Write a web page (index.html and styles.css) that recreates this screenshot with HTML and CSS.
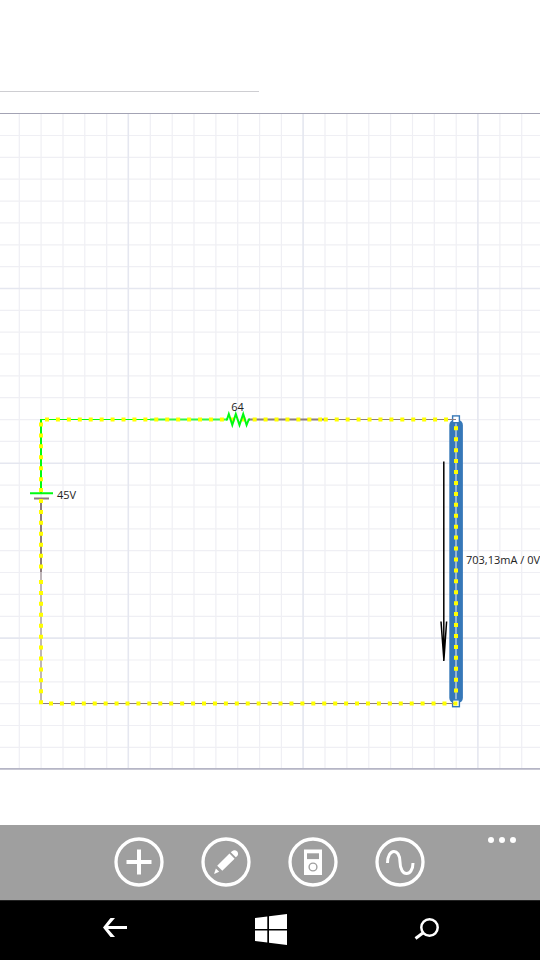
FILE: index.html
```html
<!DOCTYPE html>
<html lang="en">
<head>
<meta charset="utf-8">
<meta name="viewport" content="width=device-width, initial-scale=1">
<title>Circuit</title>
<link rel="stylesheet" href="styles.css">
</head>
<body>
<header class="header"><hr class="rule"></header>
<main class="sheet">
<svg class="circuit" viewBox="0 113 540 657" role="img" aria-label="Circuit diagram">
  <path class="grid" d="M19.3 114V768M41.1 114V768M63 114V768M84.8 114V768M106.7 114V768M150.3 114V768M172.2 114V768M194 114V768M215.9 114V768M237.7 114V768M259.6 114V768M281.4 114V768M325 114V768M346.9 114V768M368.8 114V768M390.6 114V768M412.5 114V768M434.3 114V768M456.2 114V768M499.9 114V768M521.7 114V768"/>
  <path class="grid" d="M0 135.5H540M0 157.4H540M0 179.2H540M0 201.1H540M0 222.9H540M0 244.8H540M0 266.6H540M0 310.4H540M0 332.2H540M0 354H540M0 375.9H540M0 397.7H540M0 419.6H540M0 441.4H540M0 485.1H540M0 507H540M0 528.8H540M0 550.7H540M0 572.5H540M0 594.4H540M0 616.3H540M0 660H540M0 681.8H540M0 703.6H540M0 725.5H540M0 747.3H540"/>
  <path class="grid major" d="M128.3 114V768M303.1 114V768M477.9 114V768M0 288.5H540M0 463.2H540M0 638.1H540"/>
  <path class="edge" d="M0 113.5H540"/>
  <path class="edge low" d="M0 768.9H540"/>

  <rect class="selection" x="449.3" y="420" width="13.6" height="283" rx="5"/>
  <path class="core" d="M456 422V701"/>
  <rect class="handle" x="452.6" y="415.9" width="6.8" height="6.8"/>
  <rect class="handle" x="452.6" y="699.9" width="6.8" height="6.8"/>

  <path class="live thin" d="M41 419.5H150"/>
  <path class="live pale" d="M150 419.5H227"/>
  <path class="return" d="M249 419.5H327"/>
  <path class="return thin" d="M327 419.5H456M41 703.5H456"/>
  <path class="live" d="M41 419V493M30 493.2H53"/>
  <path class="return" d="M34 498.5H49M41 498V572"/>
  <path class="return faint" d="M41 572V703"/>

  <path class="current" d="M45 419.5H322M323.8 419.5H448.5M41 422.5V569M41 580V704.8M49 703.5H458M456 426.3V693"/>
  <path class="live" d="M226 419.5H227L228.800 414L232.300 425L235.800 414L239.500 425L243.200 414L246.600 425L248.800 419.500H250"/>

  <path class="arrow" d="M443.8 461.5V661M441 621.5L443.9 660L446.6 621.5"/>
  <text class="label" x="237.5" y="411" text-anchor="middle">64</text>
  <text class="label" x="57" y="499">45V</text>
  <text class="label" x="466" y="564">703,13mA / 0V</text>
</svg>
</main>
<div class="appbar">
  <div class="tools">
    <button class="tool" aria-label="Add"><svg viewBox="0 0 50 50"><circle class="ring" cx="25" cy="25" r="23"/><path class="stroke plus" d="M25 12.500V37.500M12.500 25H37.500"/></svg></button>
    <button class="tool" aria-label="Edit"><svg viewBox="0 0 50 50"><circle class="ring" cx="25" cy="25" r="23"/><path class="solid" d="M28.500 16.600L33.600 21.700L21.300 33.800L16.200 28.700ZM29.800 15.300L31 14.300Q33.700 12 36.300 14.500Q38 17.200 36 19.200L34.800 20.300ZM14.900 31.500L18.200 34.800L13 37Z"/></svg></button>
    <button class="tool" aria-label="Measure"><svg viewBox="0 0 50 50"><circle class="ring" cx="25" cy="25" r="23"/><rect class="solid" x="16" y="12.500" width="18" height="25.500"/><rect class="hole" x="19" y="16.300" width="12" height="5.800"/><circle class="dial" cx="25" cy="30" r="3.900"/></svg></button>
    <button class="tool" aria-label="Signal"><svg viewBox="0 0 50 50"><circle class="ring" cx="25" cy="25" r="23"/><path class="stroke" d="M12.500 26C12.500 11 25 10.500 25 25C25 40.500 38 40 38 26"/></svg></button>
  </div>
  <button class="more" aria-label="More"><svg viewBox="0 0 30 8"><circle cx="4" cy="4" r="3"/><circle cx="15" cy="4" r="3"/><circle cx="26" cy="4" r="3"/></svg></button>
</div>
<nav class="nav">
  <button class="key" aria-label="Back"><svg viewBox="0 0 32 32"><path class="stroke" d="M30 13.500H8"/><path class="solid" d="M13.500 4H18L9.800 13.500L18 23H13.500L6 13.500Z"/></svg></button>
  <button class="key" aria-label="Start"><svg viewBox="0 0 32 32"><path class="solid" d="M1 4L13.300 2.500V15H1ZM15 2.200L33 0V15H15ZM1 16.500H13.300V28.500L1 27ZM15 16.500H33V31L15 28.800Z"/></svg></button>
  <button class="key" aria-label="Search"><svg viewBox="0 0 32 32"><circle class="lens" cx="18.500" cy="13.500" r="8.200"/><path class="stroke" d="M12.500 18.500L4.500 24.500"/></svg></button>
</nav>
</body>
</html>
```

FILE: styles.css
```css
* { box-sizing: border-box; }
body {
  margin: 0;
  min-height: 100vh;
  display: flex;
  flex-direction: column;
  background: #fff;
  font-family: "Open Sans", "Noto Sans", sans-serif;
}
.header { padding: 91px 0 21px; }
.rule { width: 48%; height: 1px; margin: 0; border: 0; background: #ceced2; }
.circuit { display: block; width: 100%; height: auto; }
.circuit path { fill: none; }
.circuit .grid { stroke: #efeff4; stroke-width: 1.2; }
.circuit .major { stroke: #e5e7f0; stroke-width: 1.6; }
.circuit .edge { stroke: #a3a3b4; stroke-width: 1; }
.circuit .low { stroke: #b5b5c5; stroke-width: 1.6; }
.selection { fill: #3678b8; }
.circuit .core { stroke: #92b3d9; stroke-width: 2; }
.handle { fill: #fff; stroke: #3678b8; stroke-width: 1.4; }
.circuit .live { stroke: #00fa12; stroke-width: 2; }
.circuit .pale { stroke: #30f548; }
.circuit .return { stroke: #8c7b7f; stroke-width: 2; }
.circuit .thin { stroke-width: 1; }
.circuit .faint { stroke: #beb5b8; }
.circuit .current { stroke: #ff0; stroke-width: 4; stroke-dasharray: 4 6.93; }
.circuit .arrow { stroke: #000; stroke-width: 1.5; }
.label { font-size: 11px; fill: #222; }

button { padding: 0; border: 0; background: none; color: #fff; }
button svg { display: block; width: 100%; fill: none; stroke: none; overflow: visible; }
.ring { stroke: #fff; stroke-width: 3.3; }
.stroke { stroke: #fff; stroke-width: 3; }
.plus { stroke-width: 4; }
.solid { fill: #fff; }
.hole { fill: #9f9f9f; }
.dial { stroke: #9f9f9f; stroke-width: 1.4; }
.lens { stroke: #fff; stroke-width: 2.5; }

.appbar {
  position: relative;
  margin-top: auto;
  padding: 12px 2px 13px 0;
  background: #9f9f9f;
}
.tools { display: flex; justify-content: center; gap: 37px; }
.tool { width: 50px; }
.more { position: absolute; top: 11px; right: 23px; width: 30px; }
.more svg { fill: #fff; }
.nav {
  display: flex;
  justify-content: space-between;
  padding: 13px 97px 14px;
  border-top: 1px solid #222;
  background: #000;
}
.key { width: 32px; }
```
